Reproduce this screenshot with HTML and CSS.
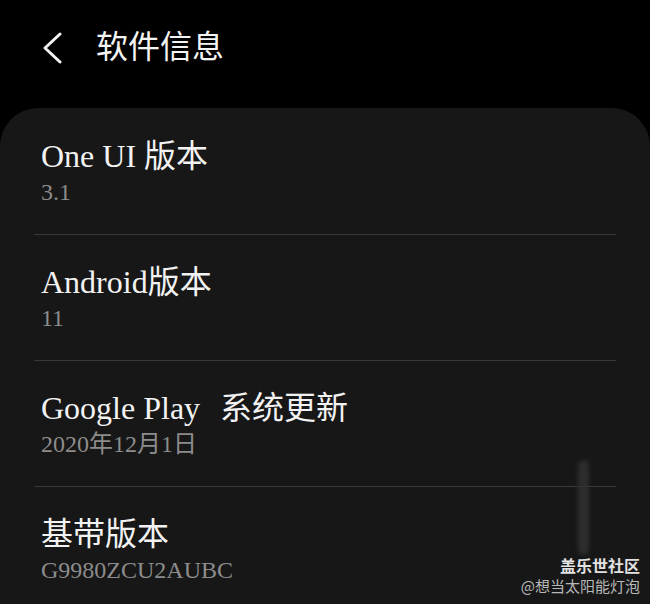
FILE: index.html
```html
<!DOCTYPE html>
<html lang="zh-CN">
<head>
  <meta charset="UTF-8">
  <title>软件信息</title>
  <meta name="viewport" content="width=device-width, initial-scale=1.0">
  <link rel="stylesheet" href="styles.css">
</head>
<body>
  <header class="topbar">
    <span class="back">
      <svg width="22" height="32" viewBox="0 0 22 32">
        <path d="M19 2 L4 16 L19 30" fill="none" stroke="#f2f2f2" stroke-width="3" stroke-linecap="round" stroke-linejoin="round"/>
      </svg>
    </span>
    <h1 class="title">软件信息</h1>
  </header>

  <main class="card">
    <div class="row">
      <div class="row-title">One UI 版本</div>
      <div class="row-sub">3.1</div>
    </div>
    <div class="row">
      <div class="row-title">Android版本</div>
      <div class="row-sub">11</div>
    </div>
    <div class="row">
      <div class="row-title">Google Play <span class="gap">系统更新</span></div>
      <div class="row-sub">2020年12月1日</div>
    </div>
    <div class="row">
      <div class="row-title">基带版本</div>
      <div class="row-sub">G9980ZCU2AUBC</div>
    </div>
  </main>

  <!-- 水印 -->
  <div class="smudge"></div>
  <div class="watermark">
    <div class="wm-name">盖乐世社区</div>
    <div class="wm-user">@想当太阳能灯泡</div>
  </div>
</body>
</html>
```

FILE: styles.css
```css
body {
  margin: 0;
  background: #000;
  height: 604px;
  overflow: hidden;
  position: relative;
  display: flex;
  flex-direction: column;
  font-family: "Liberation Serif", "Noto Sans CJK SC", serif;
}

.topbar {
  display: flex;
  align-items: center;
  height: 96px;
  flex: none;
  padding: 0 0 0 41px;
  margin-bottom: 12px;
}

.back {
  display: flex;
  width: 55px;
}

.title {
  margin: 0;
  font-size: 32px;
  font-weight: normal;
  color: #f4f4f4;
  line-height: 40px;
  margin-top: -2px;
}

.card {
  flex: 1;
  min-height: 0;
  overflow: hidden;
  background: #171717;
  border-radius: 38px 38px 0 0;
  padding-top: 1px;
}

.row {
  margin: 0 34px;
  padding: 27px 7px 26px;
  border-bottom: 1px solid #393939;
}

.row-title {
  font-size: 32px;
  line-height: 40px;
  color: #f2f2f2;
}

.gap {
  margin-left: 12px;
}

.row-sub {
  font-size: 24px;
  line-height: 32px;
  color: #8c8c8c;
}

.smudge {
  position: absolute;
  left: 578px;
  top: 460px;
  width: 11px;
  height: 95px;
  border-radius: 6px;
  background: #333;
  filter: blur(2px);
  opacity: 0.8;
}

.watermark {
  position: absolute;
  right: 10px;
  bottom: 8px;
  text-align: right;
  font-family: "Noto Sans CJK SC", sans-serif;
}

.wm-name {
  font-size: 16px;
  font-weight: bold;
  line-height: 22px;
  color: #e2e2e2;
}

.wm-user {
  font-size: 15px;
  line-height: 20px;
  color: #b8b8b8;
}
```
